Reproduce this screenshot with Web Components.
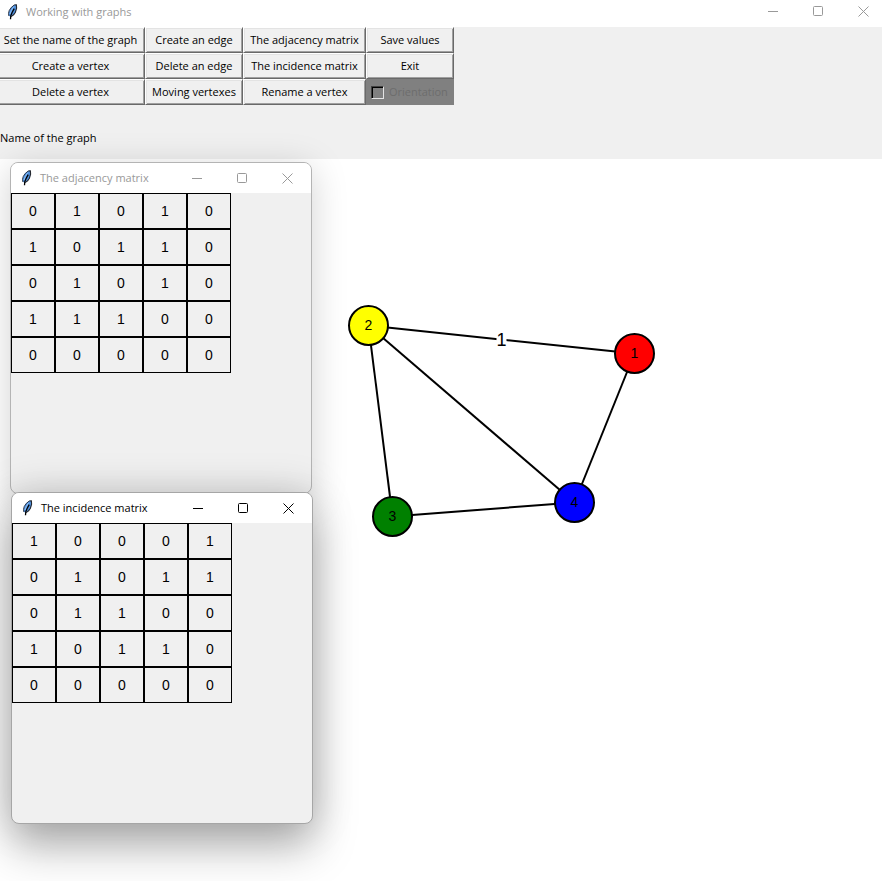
<!DOCTYPE html>
<html lang="en">
<head>
<meta charset="utf-8">
<title>Working with graphs</title>
<style>
  html, body { margin: 0; height: 100%; background: #fff; }
  body { font: 11px/16px "Open Sans", "Noto Sans", sans-serif; color: #000; }
</style>
</head>
<body>
<graph-app></graph-app>

<script>
class TkFeather extends HTMLElement {
  constructor() {
    super();
    this.attachShadow({ mode: "open" }).innerHTML = `
      <style>
        :host { display: block; width: 16px; height: 16px; flex: none; }
        svg { display: block; }
      </style>
      <svg width="16" height="16" viewBox="0 0 16 16" aria-hidden="true">
        <path d="M11 .6 L8.6 1.2 L6 3.4 L4.4 6.2 L3.6 9.4 L4 12 L5.6 12.6 L8.4 10.8 L10.6 8.2 L11.6 4.6 Z" fill="#4f8fdc"/>
        <path d="M9.2 1 L6.2 3.6 L4.2 6.6 L3.5 9.4 L3.9 12" fill="none" stroke="#2e3848" stroke-width="1"/>
        <path d="M9.2 1 L11.4 .8 L11.6 4.2 L10.4 8.2 L8.6 10.8 L6 12.6" fill="none" stroke="#23272e" stroke-width="1.1"/>
        <path d="M9.2 4.6 L7.2 8.2 L5.8 11.6 L5.5 15.2" fill="none" stroke="#000" stroke-width="1.3"/>
        <path d="M8.8 2.6 L6.4 6.2 L5 10" fill="none" stroke="#8cc0fa" stroke-width="1"/>
      </svg>`;
  }
}
customElements.define("tk-feather", TkFeather);

class TitleBar extends HTMLElement {
  constructor() {
    super();
    this.attachShadow({ mode: "open" }).innerHTML = `
      <style>
        :host { display: flex; align-items: center; box-sizing: border-box;
                height: var(--bar-height, 30px); padding: var(--bar-padding, 0 1px 0 8px);
                background: #fff; color: #999; }
        :host([active]) { color: #000; }
        .name { flex: 1; padding-left: 5px; white-space: nowrap; }
        .controls { display: flex; height: 100%; margin-right: var(--controls-overhang, 0); }
        button { display: grid; place-items: center; width: 45px; height: 100%;
                 margin: 0; padding: 0; border: 0; background: none; color: inherit; }
        svg { display: block; fill: none; stroke: currentColor; }
      </style>
      <tk-feather></tk-feather>
      <span class="name"><slot></slot></span>
      <div class="controls">
        <button aria-label="Minimize"><svg width="11" height="11"><path d="M0 5.5h10"/></svg></button>
        <button aria-label="Maximize"><svg width="11" height="11"><rect x=".5" y=".5" width="9" height="9" rx="1"/></svg></button>
        <button aria-label="Close"><svg width="11" height="11"><path d="M.5 .5l10 10M10.5 .5l-10 10"/></svg></button>
      </div>`;
  }
}
customElements.define("title-bar", TitleBar);

class ToolButton extends HTMLElement {
  constructor() {
    super();
    this.attachShadow({ mode: "open" }).innerHTML = `
      <style>
        :host { display: block; }
        button { display: block; width: 100%; height: 26px; margin: 0; padding: 0;
                 border: 1px solid; border-color: #fff #696969 #696969 #fff;
                 box-shadow: inset 1px 1px #e3e3e3, inset -1px -1px #a0a0a0;
                 background: #f0f0f0; color: #000; font: inherit; white-space: nowrap; }
      </style>
      <button><slot></slot></button>`;
  }
}
customElements.define("tool-button", ToolButton);

class ToolCheck extends HTMLElement {
  constructor() {
    super();
    this.attachShadow({ mode: "open" }).innerHTML = `
      <style>
        :host { display: block; }
        label { display: flex; align-items: center; gap: 5px; height: 26px; padding-left: 5px;
                background: #808080; color: #6d6d6d; white-space: nowrap; }
        input { appearance: none; width: 13px; height: 13px; margin: 0; flex: none;
                border: 1px solid; border-color: #404040 #e3e3e3 #e3e3e3 #404040;
                box-shadow: inset 1px 1px #000; background: #808080; }
      </style>
      <label><input type="checkbox" disabled><slot></slot></label>`;
  }
}
customElements.define("tool-check", ToolCheck);

class MatrixTable extends HTMLElement {
  connectedCallback() {
    const rows = this.getAttribute("rows").split(" ");
    const root = this.shadowRoot || this.attachShadow({ mode: "open" });
    root.innerHTML = `
      <style>
        :host { display: block; }
        table { border-spacing: 0; font: 14px/16px "Liberation Sans", sans-serif; color: #000; }
        td { box-sizing: border-box; width: 44px; height: 36px; padding: 0;
             border: 1px solid #000; text-align: center; }
      </style>
      <table>${rows.map(r => `<tr>${[...r].map(c => `<td>${c}</td>`).join("")}</tr>`).join("")}</table>`;
  }
}
customElements.define("matrix-table", MatrixTable);

class TkWindow extends HTMLElement {
  connectedCallback() {
    const active = this.hasAttribute("active");
    const root = this.shadowRoot || this.attachShadow({ mode: "open" });
    root.innerHTML = `
      <style>
        :host { display: block; width: 300px; border: 1px solid #b4b4b4; border-radius: 8px;
                background: #f0f0f0; box-shadow: 0 6px 36px rgba(0,0,0,.18); }
        :host([active]) { border-color: #a6a6a6;
                box-shadow: 0 24px 44px rgba(0,0,0,.28), 0 0 40px rgba(0,0,0,.18); }
        title-bar { border-radius: 7px 7px 0 0; }
        .body { min-height: 300px; }
      </style>
      <title-bar ${active ? "active" : ""}>${this.getAttribute("name")}</title-bar>
      <div class="body"><slot></slot></div>`;
  }
}
customElements.define("tk-window", TkWindow);

class GraphCanvas extends HTMLElement {
  constructor() {
    super();
    const at = { 1: [634, 194], 2: [368, 166], 3: [392, 357], 4: [574, 343] };
    const fill = { 1: "#f00", 2: "#ff0", 3: "#008000", 4: "#00f" };
    const edges = [[2, 1], [2, 3], [2, 4], [3, 4], [1, 4]];
    const lines = edges.map(([a, b]) =>
      `<line x1="${at[a][0]}" y1="${at[a][1]}" x2="${at[b][0]}" y2="${at[b][1]}"/>`).join("");
    const nodes = Object.keys(at).map(k =>
      `<circle cx="${at[k][0]}" cy="${at[k][1]}" r="19.5" fill="${fill[k]}"/>
       <text x="${at[k][0]}" y="${at[k][1] + 4}">${k}</text>`).join("");
    this.attachShadow({ mode: "open" }).innerHTML = `
      <style>
        :host { display: block; }
        svg { display: block; width: 100%; height: 100%; }
        line, circle { stroke: #000; stroke-width: 2; }
        text { font: 14px "Liberation Sans", sans-serif; text-anchor: middle; fill: #000; }
        .weight { font-size: 18px; }
      </style>
      <svg><g transform="translate(.5 .5)">${lines}<rect x="496" y="168" width="10" height="24" fill="#fff"/>
        <text class="weight" x="501" y="186">1</text>${nodes}</g></svg>`;
  }
}
customElements.define("graph-canvas", GraphCanvas);

class GraphApp extends HTMLElement {
  constructor() {
    super();
    this.attachShadow({ mode: "open" }).innerHTML = `
      <style>
        :host { display: flex; flex-direction: column; min-height: 100vh; overflow-x: clip; }
        .main-bar { --bar-height: 27px; --bar-padding: 0 0 4px 5px; --controls-overhang: -4px; }
        header { height: 132px; background: #f0f0f0; }
        .tools { display: grid; grid-template-columns: 149px 98px 123px 88px; margin-left: -4px; }
        .caption { margin: 0; padding-top: 25px; }
        main { position: relative; flex: 1; background: #fff; }
        graph-canvas { position: absolute; inset: 0; }
        tk-window { position: absolute; }
        .adjacency { left: 10px; top: 3px; }
        .incidence { left: 11px; top: 333px; }
      </style>
      <title-bar class="main-bar">Working with graphs</title-bar>
      <header>
        <div class="tools">
          <tool-button>Set the name of the graph</tool-button>
          <tool-button>Create an edge</tool-button>
          <tool-button>The adjacency matrix</tool-button>
          <tool-button>Save values</tool-button>
          <tool-button>Create a vertex</tool-button>
          <tool-button>Delete an edge</tool-button>
          <tool-button>The incidence matrix</tool-button>
          <tool-button>Exit</tool-button>
          <tool-button>Delete a vertex</tool-button>
          <tool-button>Moving vertexes</tool-button>
          <tool-button>Rename a vertex</tool-button>
          <tool-check>Orientation</tool-check>
        </div>
        <p class="caption">Name of the graph</p>
      </header>
      <main>
        <graph-canvas></graph-canvas>
        <tk-window class="adjacency" name="The adjacency matrix">
          <matrix-table rows="01010 10110 01010 11100 00000"></matrix-table>
        </tk-window>
        <tk-window class="incidence" name="The incidence matrix" active>
          <matrix-table rows="10001 01011 01100 10110 00000"></matrix-table>
        </tk-window>
      </main>`;
  }
}
customElements.define("graph-app", GraphApp);
</script>
</body>
</html>
